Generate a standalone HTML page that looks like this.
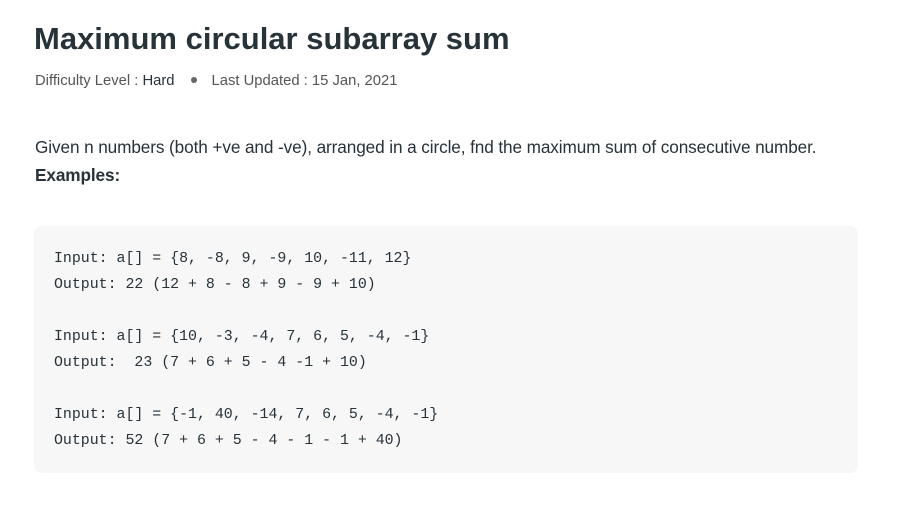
<!DOCTYPE html>
<html><head><meta charset="utf-8"><style>
body{margin:0;background:#fff;width:902px;height:522px;overflow:hidden;font-family:"Liberation Sans",sans-serif;color:#273239}
h1{position:absolute;left:34px;top:21px;margin:0;font-size:31px;font-weight:bold;white-space:nowrap}
.meta{position:absolute;left:35px;top:73px;font-size:14.8px;color:#555;white-space:nowrap;letter-spacing:0px}
.meta b{font-weight:normal;color:#273239}
.dot{display:inline-block;width:6px;height:6px;border-radius:50%;background:#666;margin:0 15px 2px 16px;vertical-align:middle}
.p{position:absolute;left:35px;top:133px;font-size:17.2px;white-space:nowrap;line-height:28px;letter-spacing:-0.1px}
.code{position:absolute;left:34px;top:226px;width:824px;height:247px;background:#f7f7f7;border-radius:8px}
pre{position:absolute;left:54px;top:246px;margin:0;font-family:"Liberation Mono",monospace;font-size:14.9px;line-height:26px;color:#273239}
</style></head><body>
<h1>Maximum circular subarray sum</h1>
<div class="meta">Difficulty Level : <b>Hard</b><span class="dot"></span>Last Updated : 15 Jan, 2021</div>
<div class="p">Given n numbers (both +ve and -ve), arranged in a circle, fnd the maximum sum of consecutive number.<br><b>Examples:</b></div>
<div class="code"></div>
<pre>Input: a[] = {8, -8, 9, -9, 10, -11, 12}
Output: 22 (12 + 8 - 8 + 9 - 9 + 10)

Input: a[] = {10, -3, -4, 7, 6, 5, -4, -1}
Output:  23 (7 + 6 + 5 - 4 -1 + 10)

Input: a[] = {-1, 40, -14, 7, 6, 5, -4, -1}
Output: 52 (7 + 6 + 5 - 4 - 1 - 1 + 40)</pre>
</body></html>
